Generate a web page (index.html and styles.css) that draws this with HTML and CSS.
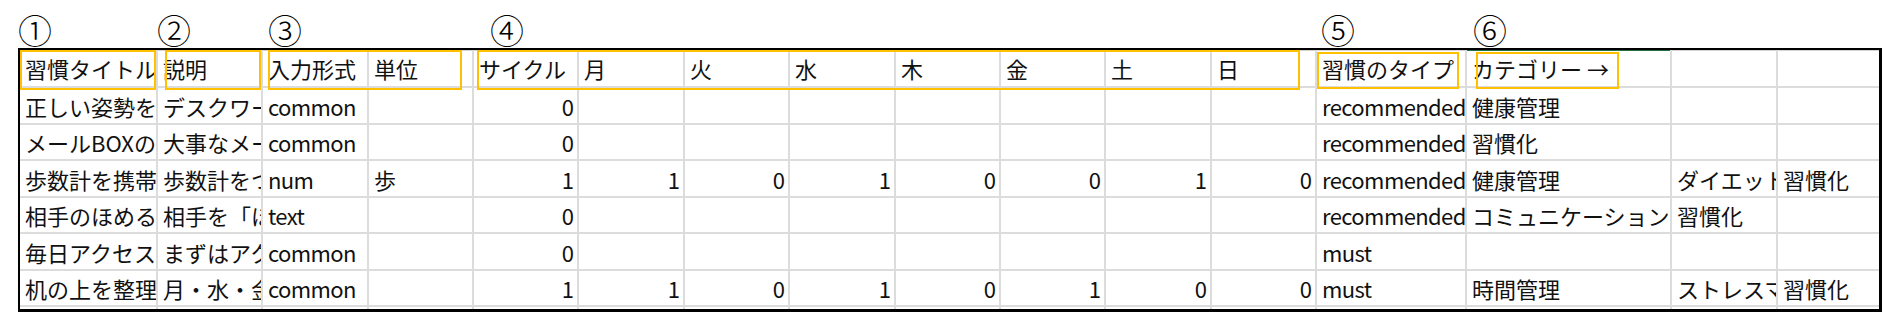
FILE: index.html
```html
<!DOCTYPE html>
<html lang="ja">
<head>
<meta charset="utf-8">
<title>習慣シート</title>
<link rel="stylesheet" href="styles.css">
</head>
<body>
<div class="sheet">
  <div class="labels">
    <span class="lbl l1">①</span>
    <span class="lbl l2">②</span>
    <span class="lbl l3">③</span>
    <span class="lbl l4">④</span>
    <span class="lbl l5">⑤</span>
    <span class="lbl l6">⑥</span>
  </div>
  <div class="table">
    <div class="grid">
      <div class="c h">習慣タイトル</div><div class="c h">説明</div><div class="c h">入力形式</div><div class="c h">単位</div><div class="c h">サイクル</div><div class="c h">月</div><div class="c h">火</div><div class="c h">水</div><div class="c h">木</div><div class="c h">金</div><div class="c h">土</div><div class="c h">日</div><div class="c h">習慣のタイプ</div><div class="c h sel">カテゴリー →</div><div class="c h"></div><div class="c h last"></div>

      <div class="c">正しい姿勢をキープする</div><div class="c">デスクワーク中は背筋を伸ばす</div><div class="c en">common</div><div class="c"></div><div class="c n">0</div><div class="c"></div><div class="c"></div><div class="c"></div><div class="c"></div><div class="c"></div><div class="c"></div><div class="c"></div><div class="c en">recommended</div><div class="c">健康管理</div><div class="c"></div><div class="c last"></div>

      <div class="c">メールBOXの整理</div><div class="c">大事なメールを見落とさない</div><div class="c en">common</div><div class="c"></div><div class="c n">0</div><div class="c"></div><div class="c"></div><div class="c"></div><div class="c"></div><div class="c"></div><div class="c"></div><div class="c"></div><div class="c en">recommended</div><div class="c">習慣化</div><div class="c"></div><div class="c last"></div>

      <div class="c">歩数計を携帯する</div><div class="c">歩数計をつけて歩く</div><div class="c en">num</div><div class="c">歩</div><div class="c n">1</div><div class="c n">1</div><div class="c n">0</div><div class="c n">1</div><div class="c n">0</div><div class="c n">0</div><div class="c n">1</div><div class="c n">0</div><div class="c en">recommended</div><div class="c">健康管理</div><div class="c">ダイエット</div><div class="c last">習慣化</div>

      <div class="c">相手のほめるところを探す</div><div class="c">相手を「ほめる」習慣</div><div class="c en">text</div><div class="c"></div><div class="c n">0</div><div class="c"></div><div class="c"></div><div class="c"></div><div class="c"></div><div class="c"></div><div class="c"></div><div class="c"></div><div class="c en">recommended</div><div class="c">コミュニケーション</div><div class="c">習慣化</div><div class="c last"></div>

      <div class="c">毎日アクセスする</div><div class="c">まずはアクセスから</div><div class="c en">common</div><div class="c"></div><div class="c n">0</div><div class="c"></div><div class="c"></div><div class="c"></div><div class="c"></div><div class="c"></div><div class="c"></div><div class="c"></div><div class="c en">must</div><div class="c"></div><div class="c"></div><div class="c last"></div>

      <div class="c">机の上を整理する</div><div class="c">月・水・金に片付ける</div><div class="c en">common</div><div class="c"></div><div class="c n">1</div><div class="c n">1</div><div class="c n">0</div><div class="c n">1</div><div class="c n">0</div><div class="c n">1</div><div class="c n">0</div><div class="c n">0</div><div class="c en">must</div><div class="c">時間管理</div><div class="c">ストレスマネジメント</div><div class="c last">習慣化</div>

      <div class="c"></div><div class="c"></div><div class="c"></div><div class="c"></div><div class="c"></div><div class="c"></div><div class="c"></div><div class="c"></div><div class="c"></div><div class="c"></div><div class="c"></div><div class="c"></div><div class="c"></div><div class="c"></div><div class="c"></div><div class="c last"></div>
    </div>
    <div class="box b1"></div>
    <div class="box b2"></div>
    <div class="box b3"></div>
    <div class="box b4"></div>
    <div class="box b5"></div>
    <div class="box b6"></div>
  </div>
</div>
</body>
</html>
```

FILE: styles.css
```css
* { box-sizing: border-box; }

body {
  margin: 0;
  background: #ffffff;
  font-family: "Noto Sans CJK JP", "Noto Sans", sans-serif;
  color: #111111;
}

.sheet {
  width: 1883px;
  height: 312px;
  overflow: hidden;
}

.labels {
  display: grid;
  grid-template-columns: 20px 138px 105px 106px 105px 105px 106px 105px 106px 105px 105px 106px 105px 150px 205px 106px 101px;
  height: 48px;
  align-items: start;
  font-size: 34px;
  line-height: 0.8;
  color: #000;
  font-weight: 300;
}

.lbl { display: block; margin-top: 16px; }
.l1 { grid-column: 2; margin-left: -2px; }
.l2 { grid-column: 3; margin-left: -1px; }
.l3 { grid-column: 4; margin-left: 5px; }
.l4 { grid-column: 6; margin-left: 16px; }
.l5 { grid-column: 14; margin-left: 4px; }
.l6 { grid-column: 15; margin-left: 6px; }

.table {
  position: relative;
  margin-left: 18px;
  width: 1864px;
  height: 264px;
  border-left: 2px solid #000;
  border-top: 2px solid #000;
  border-right: 3px solid #000;
  border-bottom: 3px solid #000;
  overflow: hidden;
}

.grid {
  display: grid;
  grid-template-columns: 138px 105px 106px 105px 105px 106px 105px 106px 105px 105px 106px 105px 150px 205px 106px 101px;
  grid-template-rows: 38px 37px 36px 37px 36px 37px 36px 36px;
}

.c {
  display: flex;
  align-items: center;
  padding: 0 4px 0 5px;
  border-right: 2px solid #dcdcdc;
  border-bottom: 2px solid #dcdcdc;
  font-size: 22px;
  line-height: 1;
  white-space: nowrap;
  overflow: hidden;
}

.c.en { letter-spacing: -0.6px; }

.c.last { border-right: none; }

.h { box-shadow: inset 0 1px 0 #d4d4d4; }
.h.sel { box-shadow: inset 0 1px 0 #217346; }

.n { justify-content: flex-end; padding-right: 3px; }

.box {
  position: absolute;
  border: 2px solid #ffc000;
  top: 0;
  height: 40px;
}

.b1 { left: 0; width: 136px; }
.b2 { left: 145px; width: 96px; }
.b3 { left: 248px; width: 194px; }
.b4 { left: 457px; width: 823px; }
.b5 { left: 1297px; width: 142px; top: 2px; height: 37px; }
.b6 { left: 1456px; width: 143px; top: 2px; height: 37px; }
```
